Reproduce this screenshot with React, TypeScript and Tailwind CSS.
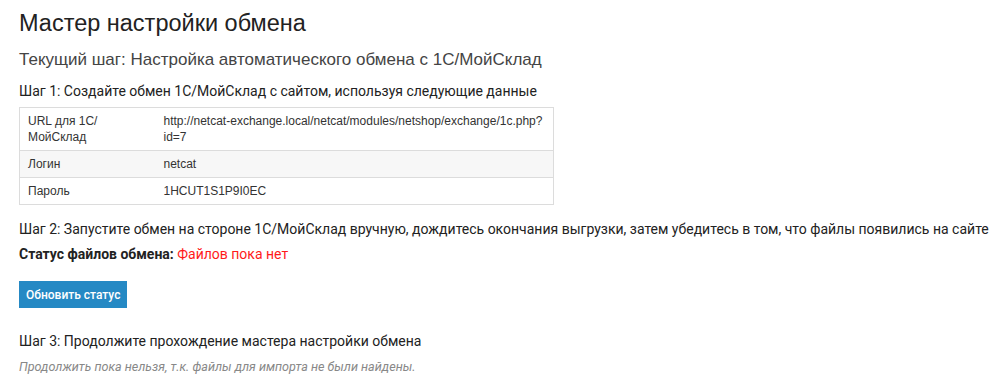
export default function App() {
  const rows = [
    {
      label: 'URL для 1С/ МойСклад',
      value: 'http://netcat-exchange.local/netcat/modules/netshop/exchange/1c.php?id=7',
    },
    { label: 'Логин', value: 'netcat' },
    { label: 'Пароль', value: '1HCUT1S1P9I0EC' },
  ];

  return (
    <div className="w-[998px] h-[389px] bg-white px-[19px] pt-[9px] text-[#333]">
      <h1 className="font-['Liberation_Sans',Arial,sans-serif] text-[23.5px] leading-[28px] text-[#222]">
        Мастер настройки обмена
      </h1>
      <h2 className="mt-[13px] font-['Liberation_Sans',Arial,sans-serif] text-[17px] leading-[20px] text-[#444]">
        Текущий шаг: Настройка автоматического обмена с 1С/МойСклад
      </h2>

      <p className="mt-[11px] font-['Roboto',sans-serif] text-[14px] leading-[20px] text-[#222]">
        Шаг 1: Создайте обмен 1С/МойСклад с сайтом, используя следующие данные
      </p>

      {/* Credentials table */}
      <table className="mt-[6px] w-[535px] border-collapse border border-[#dcdcdc] font-['Liberation_Sans',Arial,sans-serif] text-[12px] leading-[16px] text-[#333]">
        <tbody>
          {rows.map((row, i) => (
            <tr key={row.label} className={i === 1 ? 'bg-[#f7f7f7]' : 'bg-white'}>
              <td className="w-[144px] border-t border-[#dcdcdc] px-[8px] py-[5px] align-top">
                {row.label}
              </td>
              <td className="border-t border-[#dcdcdc] pl-0 pr-[8px] py-[5px] align-top break-all">
                {row.value}
              </td>
            </tr>
          ))}
        </tbody>
      </table>

      <p className="mt-[14px] font-['Roboto',sans-serif] text-[14px] leading-[20px] text-[#222] whitespace-nowrap">
        Шаг 2: Запустите обмен на стороне 1С/МойСклад вручную, дождитесь окончания выгрузки, затем убедитесь в том, что файлы появились на сайте
      </p>
      <p className="mt-[5px] font-['Roboto',sans-serif] text-[14px] leading-[20px] text-[#222]">
        <span className="font-bold">Статус файлов обмена:</span>{' '}
        <span className="text-[#ff1a1a]">Файлов пока нет</span>
      </p>

      <button className="mt-[17px] h-[27px] px-[7px] bg-[#2589c4] text-white font-['Roboto',sans-serif] font-medium text-[12px]">
        Обновить статус
      </button>

      <p className="mt-[23px] font-['Roboto',sans-serif] text-[14px] leading-[20px] text-[#222]">
        Шаг 3: Продолжите прохождение мастера настройки обмена
      </p>
      <p className="mt-[7px] font-['Roboto',sans-serif] italic text-[12.6px] leading-[18px] text-[#888]">
        Продолжить пока нельзя, т.к. файлы для импорта не были найдены.
      </p>
    </div>
  );
}
